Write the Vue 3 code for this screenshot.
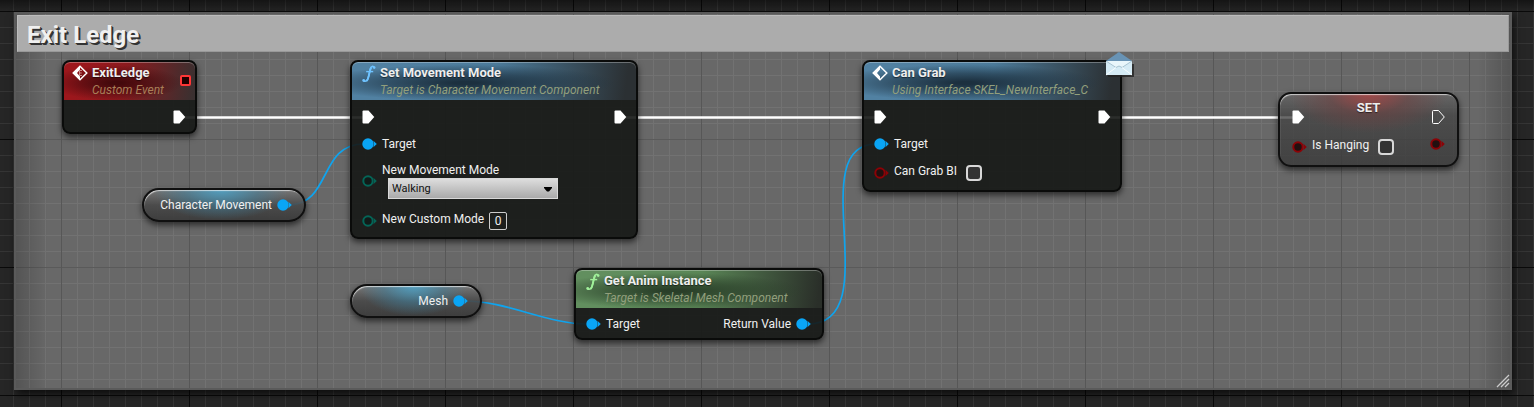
<script setup>
const wires = [
  { d: 'M184 117.5H364', kind: 'exec' },
  { d: 'M625 117.5H876', kind: 'exec' },
  { d: 'M1110 117.5H1294', kind: 'exec' },
  { d: 'M288 205C332 205 318 144 364 144', kind: 'data' },
  { d: 'M464 301C508 301 546 324 588 324', kind: 'data' },
  { d: 'M808 324C888 324 802 144 876 144', kind: 'data' },
]
const modes = ['Walking', 'Falling', 'Swimming', 'Flying']
</script>

<template>
  <main class="graph">
    <section class="comment">
      <h1>Exit Ledge</h1>
      <svg class="grip" width="14" height="14" viewBox="0 0 14 14"><path d="M1 13L13 1M5 13L13 5M9 13L13 9" /></svg>
    </section>

    <svg class="wires"><path v-for="w in wires" :key="w.d" :d="w.d" :class="w.kind" /></svg>

    <svg class="defs" width="0" height="0">
      <symbol id="exec" viewBox="0 0 13 14"><path d="M1.5 .5h5L12.3 7 6.5 13.5H1.5Q.5 13.5 .5 12.5V1.5Q.5 .5 1.5 .5z" /></symbol>
      <symbol id="pin" viewBox="0 0 15 12"><circle cx="6" cy="6" r="4.7" stroke="currentColor" /><path d="M11.4 2.8L14.8 6l-3.4 3.2q1.2-3.2 0-6.4z" fill="currentColor" /></symbol>
      <symbol id="event" viewBox="0 0 16 16">
        <path d="M8 1.2L14.8 8 8 14.8 1.2 8z" fill="none" stroke="#fff" stroke-width="1.5" />
        <path d="M8 1.2V4.5L5 8l3 3.5v3.3L1.2 8z" fill="#fff" />
      </symbol>
      <symbol id="event-custom" viewBox="0 0 16 16">
        <path d="M8 1.2L14.8 8 8 14.8 1.2 8z" fill="none" stroke="#fff" stroke-width="1.5" />
        <path d="M8 1.2V4.5L5 8l3 3.5v3.3L1.2 8z" fill="#fff" />
        <path d="M10 5.5H7.5v5H10M7.5 8h2.2" fill="none" stroke="#c98a8a" stroke-width="1" />
      </symbol>
      <symbol id="func" viewBox="0 0 14 18">
        <path d="M12.4 2.6C11.2.8 9 .9 8.2 4L6.4 12.2C5.7 15.4 4 17.2 1.4 15.8" fill="none" stroke="currentColor" stroke-width="1.6" />
        <path d="M9.4 2.2C8.2 4 7.8 6.8 7 10S6 14.6 4.4 16.2" fill="none" stroke="currentColor" stroke-width="1.8" />
        <path d="M4.2 6.6h7" stroke="currentColor" stroke-width="1.4" />
        <circle cx="12.2" cy="2.6" r="1.3" fill="currentColor" /><circle cx="1.7" cy="15.4" r="1.4" fill="currentColor" />
      </symbol>
    </svg>

    <article class="node exit">
      <header class="red">
        <svg class="icon"><use href="#event-custom" /></svg>
        <div><h2>ExitLedge</h2><p>Custom Event</p></div>
        <i class="delegate"></i>
      </header>
      <div class="row first end"><svg class="exec"><use href="#exec" /></svg></div>
    </article>

    <article class="node move">
      <header class="blue">
        <svg class="icon func"><use href="#func" /></svg>
        <div><h2>Set Movement Mode</h2><p>Target is Character Movement Component</p></div>
      </header>
      <div class="row first"><svg class="exec"><use href="#exec" /></svg><svg class="exec"><use href="#exec" /></svg></div>
      <div class="row"><span class="port"><svg class="pin object"><use href="#pin" /></svg>Target</span></div>
      <div class="row mode">
        <svg class="pin byte"><use href="#pin" /></svg>
        <div><label for="mode">New Movement Mode</label>
          <div class="drop">
            <select id="mode"><option v-for="m in modes" :key="m">{{ m }}</option></select>
            <svg width="8" height="5" viewBox="0 0 8 5"><path d="M0 0h8v1L5 4.5H3L0 1z" /></svg>
          </div>
        </div>
      </div>
      <div class="row custom"><span class="port value"><svg class="pin byte"><use href="#pin" /></svg><label for="custom">New Custom Mode</label><input id="custom" type="text" value="0"></span></div>
    </article>

    <article class="node grab">
      <header class="blue">
        <svg class="icon"><use href="#event" /></svg>
        <div><h2>Can Grab</h2><p>Using Interface SKEL_NewInterface_C</p></div>
      </header>
      <svg class="mail" viewBox="0 0 28 26">
        <path d="M2 12h26v13H2z" fill="#222" opacity=".8" />
        <path d="M0 9L13 0l13 9v3H0z" fill="#6893b5" />
        <path d="M0 9h26v14H0z" fill="#d5ebf5" />
        <path d="M0 9h26L16 15.5q-3-3-6 0z" fill="#e9f6fb" />
        <path d="M0 9l10 6.5q3-3 6 0L26 9" stroke="#a9c4d2" fill="none" />
        <path d="M0 23l10-7.5M26 23l-10-7.5" stroke="#f8fdff" fill="none" />
      </svg>
      <div class="row first"><svg class="exec"><use href="#exec" /></svg><svg class="exec"><use href="#exec" /></svg></div>
      <div class="row"><span class="port"><svg class="pin object"><use href="#pin" /></svg>Target</span></div>
      <div class="row flag"><span class="port value"><svg class="pin bool"><use href="#pin" /></svg><label for="grab">Can Grab BI</label><input id="grab" type="checkbox"></span></div>
    </article>

    <article class="node anim">
      <header class="green">
        <svg class="icon func"><use href="#func" /></svg>
        <div><h2>Get Anim Instance</h2><p>Target is Skeletal Mesh Component</p></div>
      </header>
      <div class="row only">
        <span class="port"><svg class="pin object"><use href="#pin" /></svg>Target</span>
        <span class="port">Return Value<svg class="pin object"><use href="#pin" /></svg></span>
      </div>
    </article>

    <article class="pill character"><span class="port">Character Movement<svg class="pin object"><use href="#pin" /></svg></span></article>
    <article class="pill mesh"><span class="port">Mesh<svg class="pin object"><use href="#pin" /></svg></span></article>

    <article class="setter">
      <div class="row top"><svg class="exec"><use href="#exec" /></svg><h2>SET</h2><svg class="exec hollow"><use href="#exec" /></svg></div>
      <div class="row bottom"><span class="port value"><svg class="pin bool"><use href="#pin" /></svg><label for="hang">Is Hanging</label><input id="hang" type="checkbox"></span><svg class="pin bool result"><use href="#pin" /></svg></div>
    </article>
  </main>
</template>

<style>
body { margin: 0; background: #262626; }
</style>

<style scoped>
* { box-sizing: border-box; }
.graph {
  position: relative; display: flex; min-height: 100vh; overflow: hidden;
  padding: 12px 22px 17px 14px;
  font: 12px/16px Roboto, "Liberation Sans", sans-serif; color: #f0f0f0;
  background-color: #262626;
  background-image:
    linear-gradient(#0007, transparent 12px),
    linear-gradient(90deg, #0a0a0a 1px, transparent 1px), linear-gradient(#0a0a0a 1px, transparent 1px),
    linear-gradient(90deg, #353535 1px, transparent 1px), linear-gradient(#353535 1px, transparent 1px);
  background-size: auto, 128px 128px, 128px 128px, 16px 16px, 16px 16px;
  background-position: 0 0, 61px 11px, 61px 11px, 13px 11px, 13px 11px;
}
h1, h2, p { margin: 0; }
.comment {
  position: relative; flex: 1; padding: 3px;
  background-color: #686868;
  background-image:
    linear-gradient(90deg, #0003, transparent 34px, transparent calc(100% - 34px), #0003),
    linear-gradient(90deg, #575757 1px, transparent 1px), linear-gradient(#5a5a5a 1px, transparent 1px),
    linear-gradient(90deg, #727272 1px, transparent 1px), linear-gradient(#727272 1px, transparent 1px);
  background-size: auto, 128px 128px, 128px 128px, 16px 16px, 16px 16px;
  background-position: 0 0, 47px 127px, 47px 127px, 15px 15px, 15px 15px;
  box-shadow: inset 0 0 0 2px #5a5a5a, 2px 4px 8px #000a;
}
h1 {
  height: 37px; padding: 0 9px; font-size: 24px; line-height: 39px; font-weight: 700;
  color: #f0f0f0; background: #acacac; border: 1px solid #bcbcbc; border-bottom-color: #999; border-right-color: #999;
  text-shadow: 1px 1px #333, 2px 2px #333;
}
.grip { position: absolute; right: 2px; bottom: 2px; stroke: #ccc; stroke-width: 1.3; }
.defs { position: absolute; }
.wires { position: absolute; inset: 0; width: 100%; height: 100%; fill: none; }
.wires .exec { stroke: #fff; stroke-width: 2.4; }
.wires .data { stroke: #0fa4ee; stroke-width: 1.7; }

.node {
  position: absolute; border: 2px solid #0a0b0a; border-radius: 8px;
  background: #161816e8; box-shadow: 0 3px 6px #0009;
}
.exit { left: 62px; top: 60px; width: 135px; height: 74px; }
.move { left: 350px; top: 60px; width: 288px; height: 179px; }
.grab { left: 862px; top: 60px; width: 260px; height: 132px; }
.anim { left: 574px; top: 268px; width: 250px; height: 72px; }
header { display: flex; gap: 4px; height: 38px; padding: 2px 0 0 8px; border-radius: 6px 6px 0 0; box-shadow: inset 0 1px #ffffff4d; }
.red { background: radial-gradient(ellipse at 40% 55%, #43090c 5%, #43090c99 30%, transparent 60%), linear-gradient(100deg, #9c171c 10%, #8c1a1e 45%, #3a3030 98%); }
.blue { background: radial-gradient(ellipse at 40% 55%, #1c303f 5%, #1c303f99 32%, transparent 62%), linear-gradient(97deg, #5181a2 10%, #4b7a99 50%, #2b3033 96%); }
.green { background: radial-gradient(ellipse at 40% 55%, #293e28 5%, #293e2899 32%, transparent 62%), linear-gradient(97deg, #628f5f 10%, #5a8656 50%, #2a2f29 98%); }
h2 { font-size: 13px; line-height: 17px; font-weight: 700; color: #eee; text-shadow: 0 1px 1px #0008; white-space: nowrap; }
p { font-size: 12px; line-height: 18px; font-style: italic; color: #929f7c; white-space: nowrap; }
.red p { color: #a97f58; }
.icon { width: 16px; height: 16px; flex: none; margin-top: 1px; }
.icon.func { width: 14px; height: 18px; margin-left: 2px; color: #6fc3ff; }
.green .func { color: #a0f09a; }
.delegate { position: absolute; right: 4px; top: 13px; width: 11px; height: 11px; border: 2px solid #ff3636; border-radius: 2px; background: #200; }
.row { display: flex; align-items: center; justify-content: space-between; height: 20px; padding: 0 9px 0 10px; }
.row.first { height: 34px; }
.row.only { height: 32px; padding-right: 11px; }
.row.flag { height: 38px; }
.row.custom { height: 28px; }
.row.end { justify-content: flex-end; }
.exec { width: 13px; height: 14px; fill: #fff; }
.hollow { fill: none; stroke: #fff; }
.port { display: flex; align-items: center; gap: 5px; }
.value label { padding-bottom: 5px; }
.pin { width: 15px; height: 12px; flex: none; stroke-width: 2; }
.pin.object { fill: #0aa5f5; color: #0aa5f5; }
.pin.byte { fill: #111b19; color: #046557; }
.pin.bool { fill: #221010; color: #8c0206; }
select, input { margin: 0; font: inherit; }
input[type="checkbox"] { appearance: none; width: 16px; height: 16px; margin-left: 4px; border: 2px solid #d8d8d8; border-radius: 4px; background: #333; }
.row.mode { height: 53px; justify-content: flex-start; gap: 5px; }
.drop { position: relative; margin-left: 6px; }
select { display: block; width: 170px; height: 21px; appearance: none; padding: 0 3px; border: 1px solid #d9d9d9; border-radius: 0; color: #111; font-size: 11px; background: linear-gradient(#ddd, #aaa); }
.drop svg { position: absolute; right: 6px; top: 9px; pointer-events: none; }
input[type="text"] { width: 18px; height: 18px; padding: 0; text-align: center; color: #eee; background: transparent; border: 1px solid #ccc; border-radius: 2px; }
.mail { position: absolute; right: -14px; top: -10px; width: 28px; height: 26px; }
.pill, .setter {
  position: absolute; border: 2px solid #101010; border-radius: 17px;
  box-shadow: 0 3px 6px #0009, inset 1px 2px 1px -1px #fffa;
}
.pill {
  display: flex; align-items: center; justify-content: flex-end; height: 34px; padding-right: 12px;
  background: radial-gradient(ellipse 42% 100% at 48% 0, #4aa8d0cc, #3f86a677 55%, transparent), linear-gradient(#777e, #484848e6 50%, #393939e6);
}
.character { left: 142px; top: 188px; width: 164px; }
.mesh { left: 350px; top: 284px; width: 132px; }
.setter {
  left: 1278px; top: 92px; width: 181px; height: 75px; border-radius: 13px;
  background: radial-gradient(ellipse 45% 55% at 50% 0, #a84444dd, #70404088 50%, transparent), linear-gradient(#666c, #454545cc 30%, #383838cc);
}
.setter .row { padding: 0 12px; }
.setter .top { height: 40px; padding-top: 6px; }
.setter h2 { align-self: flex-start; line-height: 15px; }
.setter .bottom { height: 26px; }
.result { align-self: flex-start; margin-top: 4px; }
</style>
